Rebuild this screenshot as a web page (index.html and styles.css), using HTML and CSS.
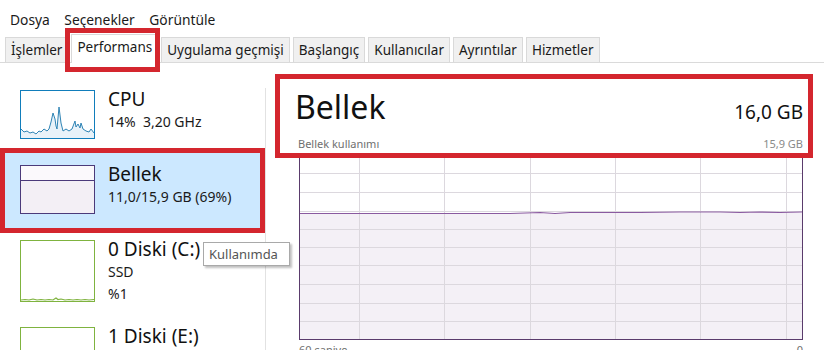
FILE: index.html
```html
<!DOCTYPE html>
<html lang="tr">
<head>
<meta charset="utf-8">
<title>Görev Yöneticisi</title>
<link rel="stylesheet" href="styles.css">
</head>
<body>
<div class="window">
  <div class="menubar">
    <span>Dosya</span>
    <span>Seçenekler</span>
    <span>Görüntüle</span>
  </div>
  <div class="tabstrip">
    <div class="tab">İşlemler</div>
    <div class="tab active">Performans</div>
    <div class="tab">Uygulama geçmişi</div>
    <div class="tab">Başlangıç</div>
    <div class="tab">Kullanıcılar</div>
    <div class="tab">Ayrıntılar</div>
    <div class="tab">Hizmetler</div>
  </div>
  <div class="main">
    <div class="sidebar">
      <div class="perf-item">
        <div class="mini mini-cpu">
          <svg viewBox="0 0 73 47" width="73" height="47">
            <polygon class="cpu-fill" points="0,38 3,41 6,40 9,42 12,41 15,43 18,40 20,41 23,38 26,40 28,38 30,31 32,22 34,28 35,35 36,38 38,16 40,32 42,40 45,38 48,40 51,38 54,30 55,36 57,33 59,37 60,32 62,38 65,40 68,41 70,38 73,42 73,47 0,47"/>
            <polyline class="cpu-line" points="0,38 3,41 6,40 9,42 12,41 15,43 18,40 20,41 23,38 26,40 28,38 30,31 32,22 34,28 35,35 36,38 38,16 40,32 42,40 45,38 48,40 51,38 54,30 55,36 57,33 59,37 60,32 62,38 65,40 68,41 70,38 73,42"/>
          </svg>
        </div>
        <div class="info">
          <div class="title">CPU</div>
          <div class="sub">14%&nbsp; 3,20 GHz</div>
        </div>
      </div>
      <div class="perf-item selected">
        <div class="mini mini-mem">
          <div class="mem-free"></div>
          <div class="mem-used"></div>
        </div>
        <div class="info">
          <div class="title">Bellek</div>
          <div class="sub">11,0/15,9 GB (69%)</div>
        </div>
      </div>
      <div class="perf-item disk">
        <div class="mini mini-disk">
          <svg viewBox="0 0 73 60" width="73" height="60">
            <polyline class="disk-line" points="0,59 4,58.5 8,59 12,58 16,59 20,58.5 24,59 28,58.5 32,59 35,57 37,58.5 40,58 44,59 48,58.5 52,59 56,58.5 60,59 64,58.5 68,59 73,58.5"/>
          </svg>
        </div>
        <div class="info">
          <div class="title">0 Diski (C:)</div>
          <div class="sub">SSD</div>
          <div class="sub">%1</div>
        </div>
        <div class="tooltip">Kullanımda</div>
      </div>
      <div class="perf-item">
        <div class="mini mini-disk tall"></div>
        <div class="info">
          <div class="title">1 Diski (E:)</div>
        </div>
      </div>
    </div>
    <div class="divider"></div>
    <div class="detail">
      <div class="detail-head">
        <div class="head-row">
          <div class="big-title">Bellek</div>
          <div class="big-value">16,0 GB</div>
        </div>
        <div class="head-row small">
          <div class="caption">Bellek kullanımı</div>
          <div class="caption light">15,9 GB</div>
        </div>
      </div>
      <div class="chart">
        <svg viewBox="0 0 502 183" width="502" height="183" preserveAspectRatio="none">
          <rect class="used" x="0" y="57" width="502" height="126"/>
          <g class="grid">
            <line x1="0" y1="17.5" x2="502" y2="17.5"/>
            <line x1="0" y1="36.5" x2="502" y2="36.5"/>
            <line x1="0" y1="55.5" x2="502" y2="55.5"/>
            <line x1="0" y1="73.5" x2="502" y2="73.5"/>
            <line x1="0" y1="91.5" x2="502" y2="91.5"/>
            <line x1="0" y1="109.5" x2="502" y2="109.5"/>
            <line x1="0" y1="128.5" x2="502" y2="128.5"/>
            <line x1="0" y1="147.5" x2="502" y2="147.5"/>
            <line x1="0" y1="165.5" x2="502" y2="165.5"/>
            <line x1="59.5" y1="0" x2="59.5" y2="183"/>
            <line x1="144.5" y1="0" x2="144.5" y2="183"/>
            <line x1="230.5" y1="0" x2="230.5" y2="183"/>
            <line x1="315.5" y1="0" x2="315.5" y2="183"/>
            <line x1="400.5" y1="0" x2="400.5" y2="183"/>
            <line x1="486.5" y1="0" x2="486.5" y2="183"/>
          </g>
          <polyline class="mem-line" points="0,57.5 100,57.5 170,57.5 210,57.5 225,57 240,56.5 255,57.5 270,56.5 300,56.5 340,56.5 380,56 420,56 440,56.5 460,56 480,56.5 502,56"/>
        </svg>
      </div>
      <div class="chart-labels">
        <span>60 saniye</span>
        <span>0</span>
      </div>
    </div>
  </div>
</div>
</body>
</html>
```

FILE: styles.css
```css
* { box-sizing: border-box; }
html, body {
  margin: 0;
  padding: 0;
  background: #ffffff;
}
body {
  width: 824px;
  height: 350px;
  overflow: hidden;
  font-family: "Noto Sans", "Open Sans", sans-serif;
  color: #1a1a1a;
}
.window {
  width: 824px;
  height: 350px;
  display: flex;
  flex-direction: column;
}

/* menu */
.menubar {
  height: 35px;
  padding: 8px 0 0 10px;
  display: flex;
  gap: 14.5px;
  font-size: 13.8px;
  line-height: 24px;
  color: #1a1a1a;
}

/* tabs */
.tabstrip {
  height: 28px;
  display: flex;
  align-items: flex-end;
  gap: 3px;
  padding-left: 5px;
  border-bottom: 1px solid #dadada;
}
.tab {
  height: 25px;
  padding: 0 5px;
  background: #f0f0f0;
  border: 1px solid #d9d9d9;
  border-bottom: none;
  font-size: 13.5px;
  line-height: 24px;
  color: #1a1a1a;
  white-space: nowrap;
}
.tab.active {
  position: relative;
  height: 29px;
  margin-bottom: -1px;
  background: #ffffff;
  line-height: 24px;
  padding: 0 5px;
}
.tab.active::after {
  content: "";
  position: absolute;
  left: -7px;
  right: -3px;
  top: -7px;
  bottom: -9px;
  border: 5px solid #d4262e;
}

/* main area */
.main {
  flex: 1;
  display: flex;
  min-height: 0;
}
.sidebar {
  width: 265px;
  flex: none;
  padding-top: 15px;
  position: relative;
}
.divider {
  width: 1px;
  flex: none;
  margin-top: 25px;
  background: #e2e2e2;
}

.perf-item {
  position: relative;
  width: 255px;
  height: 75px;
  margin-left: 5px;
  padding: 9px 0 0 15px;
  display: flex;
  align-items: flex-start;
  gap: 13px;
}
.perf-item.disk {
  height: 87px;
}
.perf-item.selected {
  background: #cce8ff;
  outline: 5px solid #d4262e;
}
.mini {
  flex: none;
  width: 75px;
  height: 49px;
  margin-top: 3px;
  border: 1px solid #117dbb;
  background: #ffffff;
}
.mini svg { display: block; }
.cpu-fill { fill: #e8f2f9; }
.cpu-line { fill: none; stroke: #2f84b5; stroke-width: 1; }
.mini-mem {
  border-color: #4b3a7a;
  display: flex;
  flex-direction: column;
}
.mem-free {
  height: 15px;
  background: #fbf9fc;
  border-bottom: 1px solid #4b3a7a;
}
.mem-used {
  flex: 1;
  background: #f3eff5;
}
.mini-disk {
  height: 62px;
  border-color: #7fb33f;
}
.mini-disk.tall {
  height: 62px;
}
.disk-line { fill: none; stroke: #7fb33f; stroke-width: 1.2; }

.info {
  display: flex;
  flex-direction: column;
}
.title {
  font-size: 19px;
  line-height: 24px;
  color: #111111;
  white-space: nowrap;
}
.sub {
  font-size: 14px;
  line-height: 22px;
  color: #1a1a1a;
  white-space: nowrap;
}

.tooltip {
  position: absolute;
  left: 198px;
  top: 14px;
  width: 87px;
  height: 24px;
  padding: 0 0 0 5px;
  background: #ffffff;
  border: 1px solid #a9a9a9;
  box-shadow: 2px 2px 2px rgba(0, 0, 0, 0.25);
  font-size: 13px;
  line-height: 22px;
  color: #555555;
  white-space: nowrap;
}

/* detail */
.detail {
  flex: 1;
  padding: 11px 11px 0 9px;
  display: flex;
  flex-direction: column;
  min-width: 0;
}
.detail-head {
  position: relative;
  z-index: 1;
  height: 84px;
  border: 5px solid #d4262e;
  padding: 8px 5px 2px 15px;
  background: #ffffff;
}
.head-row {
  display: flex;
  justify-content: space-between;
  align-items: baseline;
}
.big-title {
  font-size: 32px;
  line-height: 40px;
  color: #111111;
}
.big-value {
  font-size: 19px;
  line-height: 24px;
  color: #111111;
}
.head-row.small {
  margin-top: 10px;
  padding-left: 3px;
}
.caption {
  font-size: 11px;
  line-height: 14px;
  color: #6f6f6f;
}
.caption.light {
  color: #8a8a8a;
}
.chart {
  margin: -3px 10px 0 24px;
  height: 185px;
  border: 1px solid #5a3b6c;
  background: #ffffff;
}
.chart svg {
  display: block;
  width: 100%;
  height: 100%;
}
.chart .used { fill: #f4f0f6; }
.chart .grid line { stroke: #dcd8de; stroke-width: 1; }
.chart .mem-line { fill: none; stroke: #8a5aa0; stroke-width: 1.2; }
.chart-labels {
  margin: 3px 10px 0 24px;
  display: flex;
  justify-content: space-between;
  font-size: 11px;
  line-height: 14px;
  color: #6f6f6f;
}
```
